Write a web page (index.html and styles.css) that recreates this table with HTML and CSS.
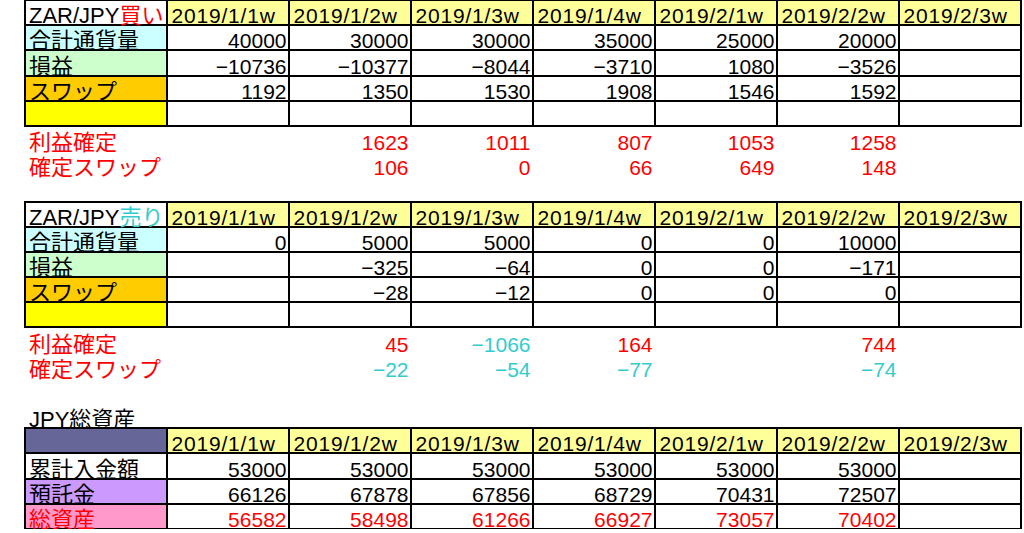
FILE: index.html
```html
<!DOCTYPE html>
<html lang="ja">
<head>
<meta charset="utf-8">
<title>ZAR/JPY</title>
<link rel="stylesheet" href="styles.css">
</head>
<body>
<main class="sheet">
  <!-- Block 1: buy -->
  <div class="grid bordered">
    <div class="cell label bg-white">ZAR/JPY<span class="t-red">買い</span></div>
    <div class="cell date">2019/1/1w</div>
    <div class="cell date">2019/1/2w</div>
    <div class="cell date">2019/1/3w</div>
    <div class="cell date">2019/1/4w</div>
    <div class="cell date">2019/2/1w</div>
    <div class="cell date">2019/2/2w</div>
    <div class="cell date">2019/2/3w</div>

    <div class="cell label bg-cyan">合計通貨量</div>
    <div class="cell num">40000</div><div class="cell num">30000</div><div class="cell num">30000</div><div class="cell num">35000</div><div class="cell num">25000</div><div class="cell num">20000</div><div class="cell num"></div>

    <div class="cell label bg-green">損益</div>
    <div class="cell num">−10736</div><div class="cell num">−10377</div><div class="cell num">−8044</div><div class="cell num">−3710</div><div class="cell num">1080</div><div class="cell num">−3526</div><div class="cell num"></div>

    <div class="cell label bg-orange">スワップ</div>
    <div class="cell num">1192</div><div class="cell num">1350</div><div class="cell num">1530</div><div class="cell num">1908</div><div class="cell num">1546</div><div class="cell num">1592</div><div class="cell num"></div>

    <div class="cell label bg-yellow"></div>
    <div class="cell num"></div><div class="cell num"></div><div class="cell num"></div><div class="cell num"></div><div class="cell num"></div><div class="cell num"></div><div class="cell num"></div>
  </div>
  <div class="grid notes">
    <div class="cell label t-red">利益確定</div>
    <div class="cell num"></div><div class="cell num t-red">1623</div><div class="cell num t-red">1011</div><div class="cell num t-red">807</div><div class="cell num t-red">1053</div><div class="cell num t-red">1258</div><div class="cell num"></div>
    <div class="cell label t-red">確定スワップ</div>
    <div class="cell num"></div><div class="cell num t-red">106</div><div class="cell num t-red">0</div><div class="cell num t-red">66</div><div class="cell num t-red">649</div><div class="cell num t-red">148</div><div class="cell num"></div>
  </div>

  <!-- Block 2: sell -->
  <div class="grid bordered">
    <div class="cell label bg-white">ZAR/JPY<span class="t-cyan">売り</span></div>
    <div class="cell date">2019/1/1w</div>
    <div class="cell date">2019/1/2w</div>
    <div class="cell date">2019/1/3w</div>
    <div class="cell date">2019/1/4w</div>
    <div class="cell date">2019/2/1w</div>
    <div class="cell date">2019/2/2w</div>
    <div class="cell date">2019/2/3w</div>

    <div class="cell label bg-cyan">合計通貨量</div>
    <div class="cell num">0</div><div class="cell num">5000</div><div class="cell num">5000</div><div class="cell num">0</div><div class="cell num">0</div><div class="cell num">10000</div><div class="cell num"></div>

    <div class="cell label bg-green">損益</div>
    <div class="cell num"></div><div class="cell num">−325</div><div class="cell num">−64</div><div class="cell num">0</div><div class="cell num">0</div><div class="cell num">−171</div><div class="cell num"></div>

    <div class="cell label bg-orange">スワップ</div>
    <div class="cell num"></div><div class="cell num">−28</div><div class="cell num">−12</div><div class="cell num">0</div><div class="cell num">0</div><div class="cell num">0</div><div class="cell num"></div>

    <div class="cell label bg-yellow"></div>
    <div class="cell num"></div><div class="cell num"></div><div class="cell num"></div><div class="cell num"></div><div class="cell num"></div><div class="cell num"></div><div class="cell num"></div>
  </div>
  <div class="grid notes">
    <div class="cell label t-red">利益確定</div>
    <div class="cell num"></div><div class="cell num t-red">45</div><div class="cell num t-cyan">−1066</div><div class="cell num t-red">164</div><div class="cell num"></div><div class="cell num t-red">744</div><div class="cell num"></div>
    <div class="cell label t-red">確定スワップ</div>
    <div class="cell num"></div><div class="cell num t-cyan">−22</div><div class="cell num t-cyan">−54</div><div class="cell num t-cyan">−77</div><div class="cell num"></div><div class="cell num t-cyan">−74</div><div class="cell num"></div>
  </div>

  <!-- Block 3: JPY total assets -->
  <div class="title cell label">JPY総資産</div>
  <div class="grid bordered">
    <div class="cell label bg-slate"></div>
    <div class="cell date">2019/1/1w</div>
    <div class="cell date">2019/1/2w</div>
    <div class="cell date">2019/1/3w</div>
    <div class="cell date">2019/1/4w</div>
    <div class="cell date">2019/2/1w</div>
    <div class="cell date">2019/2/2w</div>
    <div class="cell date">2019/2/3w</div>

    <div class="cell label bg-white">累計入金額</div>
    <div class="cell num">53000</div><div class="cell num">53000</div><div class="cell num">53000</div><div class="cell num">53000</div><div class="cell num">53000</div><div class="cell num">53000</div><div class="cell num"></div>

    <div class="cell label bg-purple">預託金</div>
    <div class="cell num">66126</div><div class="cell num">67878</div><div class="cell num">67856</div><div class="cell num">68729</div><div class="cell num">70431</div><div class="cell num">72507</div><div class="cell num"></div>

    <div class="cell label bg-pink t-red">総資産</div>
    <div class="cell num t-red">56582</div><div class="cell num t-red">58498</div><div class="cell num t-red">61266</div><div class="cell num t-red">66927</div><div class="cell num t-red">73057</div><div class="cell num t-red">70402</div><div class="cell num"></div>
  </div>
</main>
</body>
</html>
```
FILE: styles.css
```css
* { box-sizing: border-box; }

body {
  margin: 0;
  background: #ffffff;
  color: #000000;
  font-family: "Liberation Sans", "Noto Sans CJK JP", sans-serif;
  font-size: 21px;
}

.sheet {
  padding-left: 24px;
  display: flex;
  flex-direction: column;
  align-items: flex-start;
}

.grid {
  display: grid;
  grid-template-columns: 141.5px repeat(7, 122px);
  grid-auto-rows: 25.2px;
  border-left: 2px solid transparent;
}

.bordered {
  border-left-color: #000;
  border-top: 2px solid #000;
  margin: -1px 0;
}

.notes {
  margin-bottom: 25.2px;
}

.cell {
  display: flex;
  align-items: flex-end;
  line-height: 17px;
  padding: 0 1px 0 4px;
  white-space: nowrap;
  border-right: 2px solid transparent;
  border-bottom: 2px solid transparent;
}

.bordered .cell {
  border-right-color: #000;
  border-bottom-color: #000;
  background: #fff;
}

.notes .cell {
  border-bottom: 0;
}

.num { justify-content: flex-end; }

.date { letter-spacing: 0.8px; }

.label {
  font-size: 22px;
  padding-left: 3px;
}

.title {
  height: 25.2px;
  border: 0;
  padding-left: 5px;
}

.bordered .date { background: #ffff99; }
.bordered .bg-white { background: #ffffff; }
.bordered .bg-cyan { background: #ccffff; }
.bordered .bg-green { background: #ccffcc; }
.bordered .bg-orange { background: #ffcc00; }
.bordered .bg-yellow { background: #ffff00; }
.bordered .bg-slate { background: #666699; }
.bordered .bg-purple { background: #cc99ff; }
.bordered .bg-pink { background: #ff99cc; }

.t-red { color: #ff0000; }
.t-cyan { color: #33cccc; }
```
